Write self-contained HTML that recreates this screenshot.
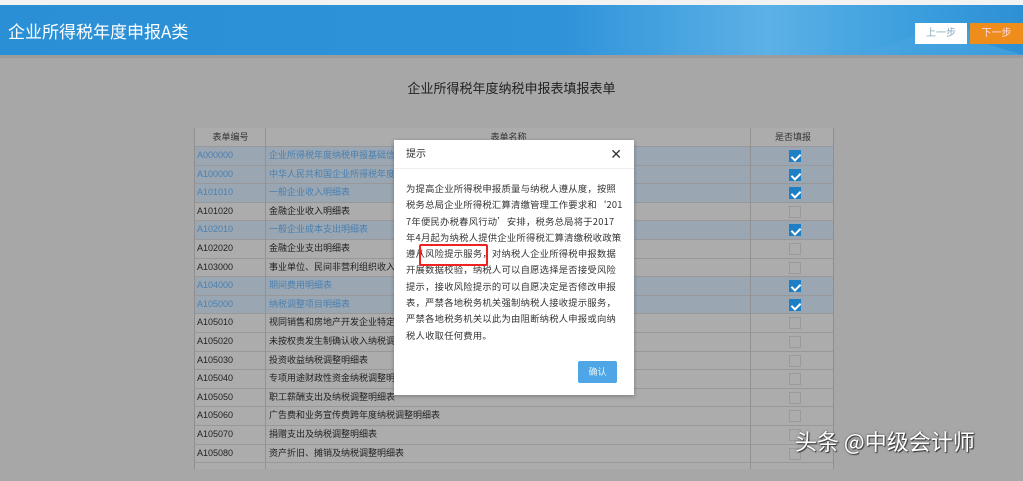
<!DOCTYPE html>
<html><head><meta charset="utf-8"><style>
*{margin:0;padding:0;box-sizing:border-box}
html,body{background:#a7a7a8}
body{width:1023px;height:469px;overflow:hidden;font-family:"Liberation Sans","Noto Sans CJK SC",sans-serif;position:relative}
.top{position:absolute;left:0;top:0;width:1023px;height:5px;background:#f2f2f2}
.hdr{position:absolute;left:0;top:5px;width:1023px;height:50px;background:linear-gradient(90deg,#2b8fd5 0%,#2f93d9 55%,#5cb1e6 75%,#3a9ddd 90%,#2e90d4 100%);overflow:hidden}
.hdr .t{position:absolute;left:8px;top:13px;color:#fff;font-size:17px;font-family:"Noto Sans CJK SC",sans-serif}
.b1{position:absolute;left:915px;top:18px;width:52px;height:21px;background:#fff;color:#8ab;font-size:10px;text-align:center;line-height:21px}
.b2{position:absolute;left:970px;top:18px;width:53px;height:21px;background:#ef8d1c;color:#fde;font-size:10px;text-align:center;line-height:21px}
.bar{position:absolute;left:0;top:55px;width:1023px;height:3px;background:#9a9c9e}
.title{position:absolute;left:0;width:1023px;top:78px;text-align:center;font-size:13px;color:#222;font-family:"Noto Sans CJK SC",sans-serif}
.tbl{position:absolute;left:194px;top:128px;width:640px;height:341px;background:#acacad;border-left:1px solid #8f8f90;border-right:1px solid #8f8f90}
.th{position:absolute;top:0;height:18px;font-size:9px;color:#333;text-align:center;line-height:18px}
.vl{position:absolute;top:0;bottom:0;width:1px;background:#929293}
.row{position:absolute;left:0;width:638px;height:18.6px;border-top:1px solid #98989a;font-size:9px;line-height:17px;color:#222}
.row.h{background:#9aa7b3}
.row .c{position:absolute;left:2px}
.row .n{position:absolute;left:74px}
.row.h .c,.row.h .n{color:#4a7fb0}
.cb{position:absolute;left:594px;top:3px;width:12px;height:12px;border:1px solid #9a9a9b}
.cb.on{background:#1f7fc4;border-color:#1f7fc4}
.cb.on:after{content:"";position:absolute;left:3px;top:1px;width:4px;height:7px;border:solid #fff;border-width:0 2px 2px 0;transform:rotate(45deg)}
.modal{position:absolute;left:394px;top:140px;width:240px;height:255px;background:#fff;box-shadow:0 1px 4px rgba(0,0,0,.3)}
.mh{height:29px;border-bottom:1px solid #eee;font-size:10px;color:#333;line-height:29px;padding-left:12px;position:relative}
.x{position:absolute;right:12px;top:0;font-size:14px;color:#333}
.mb{position:absolute;left:12px;top:40px;font-size:9.3px;line-height:16.3px;color:#333;white-space:nowrap;letter-spacing:0.25px;font-family:"Noto Sans CJK SC",sans-serif}
.red{position:absolute;left:25px;top:104px;width:69px;height:22px;border:2px solid #e22;border-radius:2px}
.ok{position:absolute;left:184px;top:221px;width:39px;height:22px;background:#4ea6e6;color:#e8f3fc;font-size:9px;text-align:center;line-height:22px;border-radius:2px}
.wm{position:absolute;left:795px;top:425px;font-size:22px;color:#fff;font-family:"Noto Sans CJK SC",sans-serif;text-shadow:1px 1px 1px #333,0 0 2px #555}
</style></head><body>
<div class="top"></div>
<div class="hdr"><div class="t">企业所得税年度申报A类</div>
<svg style="position:absolute;left:860px;top:0" width="163" height="50"><path d="M0 45 C40 40 60 25 80 20 C95 15 110 25 130 40 L163 50 L0 50Z" fill="#4aa5e0" opacity=".6"/></svg>
<div class="b1">上一步</div><div class="b2">下一步</div></div>
<div class="bar"></div>
<div class="title">企业所得税年度纳税申报表填报表单</div>
<div class="tbl">
<div class="th" style="left:0;width:71px">表单编号</div>
<div class="th" style="left:71px;width:485px">表单名称</div>
<div class="th" style="left:556px;width:84px">是否填报</div>
<div class="row h" style="top:18px"><span class="c">A000000</span><span class="n">企业所得税年度纳税申报基础信息表</span><i class="cb on"></i></div>
<div class="row h" style="top:36.6px"><span class="c">A100000</span><span class="n">中华人民共和国企业所得税年度纳税申报表</span><i class="cb on"></i></div>
<div class="row h" style="top:55.2px"><span class="c">A101010</span><span class="n">一般企业收入明细表</span><i class="cb on"></i></div>
<div class="row" style="top:73.8px"><span class="c">A101020</span><span class="n">金融企业收入明细表</span><i class="cb"></i></div>
<div class="row h" style="top:92.4px"><span class="c">A102010</span><span class="n">一般企业成本支出明细表</span><i class="cb on"></i></div>
<div class="row" style="top:111px"><span class="c">A102020</span><span class="n">金融企业支出明细表</span><i class="cb"></i></div>
<div class="row" style="top:129.6px"><span class="c">A103000</span><span class="n">事业单位、民间非营利组织收入、支出明细表</span><i class="cb"></i></div>
<div class="row h" style="top:148.2px"><span class="c">A104000</span><span class="n">期间费用明细表</span><i class="cb on"></i></div>
<div class="row h" style="top:166.8px"><span class="c">A105000</span><span class="n">纳税调整项目明细表</span><i class="cb on"></i></div>
<div class="row" style="top:185.4px"><span class="c">A105010</span><span class="n">视同销售和房地产开发企业特定业务纳税调整明细表</span><i class="cb"></i></div>
<div class="row" style="top:204px"><span class="c">A105020</span><span class="n">未按权责发生制确认收入纳税调整明细表</span><i class="cb"></i></div>
<div class="row" style="top:222.6px"><span class="c">A105030</span><span class="n">投资收益纳税调整明细表</span><i class="cb"></i></div>
<div class="row" style="top:241.2px"><span class="c">A105040</span><span class="n">专项用途财政性资金纳税调整明细表</span><i class="cb"></i></div>
<div class="row" style="top:259.8px"><span class="c">A105050</span><span class="n">职工薪酬支出及纳税调整明细表</span><i class="cb"></i></div>
<div class="row" style="top:278.4px"><span class="c">A105060</span><span class="n">广告费和业务宣传费跨年度纳税调整明细表</span><i class="cb"></i></div>
<div class="row" style="top:297px"><span class="c">A105070</span><span class="n">捐赠支出及纳税调整明细表</span><i class="cb"></i></div>
<div class="row" style="top:315.6px"><span class="c">A105080</span><span class="n">资产折旧、摊销及纳税调整明细表</span><i class="cb"></i></div>
<div class="row" style="top:334.2px"></div>
<div class="vl" style="left:70px"></div>
<div class="vl" style="left:555px"></div>
</div>
<div class="modal">
<div class="mh">提示<span class="x">✕</span></div>
<div class="mb">为提高企业所得税申报质量与纳税人遵从度，按照<br>税务总局企业所得税汇算清缴管理工作要求和‘201<br>7年便民办税春风行动’安排，税务总局将于2017<br>年4月起为纳税人提供企业所得税汇算清缴税收政策<br>遵从风险提示服务，对纳税人企业所得税申报数据<br>开展数据校验，纳税人可以自愿选择是否接受风险<br>提示，接收风险提示的可以自愿决定是否修改申报<br>表，严禁各地税务机关强制纳税人接收提示服务，<br>严禁各地税务机关以此为由阻断纳税人申报或向纳<br>税人收取任何费用。</div>
<div class="red"></div>
<div class="ok">确认</div>
</div>
<div class="wm">头条 @中级会计师</div>
</body></html>
